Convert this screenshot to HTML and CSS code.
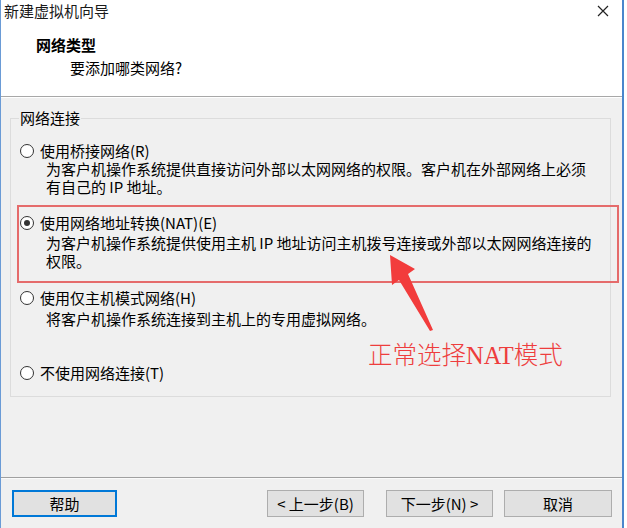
FILE: index.html
```html
<!DOCTYPE html>
<html lang="zh-CN">
<head>
<meta charset="utf-8">
<title>新建虚拟机向导</title>
<link rel="stylesheet" href="styles.css">
</head>
<body>
<div class="window">
  <div class="titlebar">
    <span class="title">新建虚拟机向导</span>
    <svg class="close" width="12" height="12" viewBox="0 0 12 12"><path d="M1 1 L11 11 M11 1 L1 11" stroke="#222" stroke-width="1.2" fill="none"/></svg>
  </div>
  <div class="header">
    <div class="h-title">网络类型</div>
    <div class="h-sub">要添加哪类网络?</div>
  </div>
  <div class="sep"></div>
  <div class="body">
    <div class="group">
      <div class="legend">网络连接</div>
      <div class="opt opt1">
        <div class="opt-title"><span class="radio"></span>使用桥接网络(R)</div>
        <div class="desc">为客户机操作系统提供直接访问外部以太网网络的权限。客户机在外部网络上必须<br>有自己的 IP 地址。</div>
      </div>
      <div class="opt opt2">
        <div class="opt-title"><span class="radio checked"></span>使用网络地址转换(NAT)(E)</div>
        <div class="desc">为客户机操作系统提供使用主机 IP 地址访问主机拨号连接或外部以太网网络连接的<br>权限。</div>
      </div>
      <div class="opt opt3">
        <div class="opt-title"><span class="radio"></span>使用仅主机模式网络(H)</div>
        <div class="desc">将客户机操作系统连接到主机上的专用虚拟网络。</div>
      </div>
      <div class="opt opt4">
        <div class="opt-title"><span class="radio"></span>不使用网络连接(T)</div>
      </div>
    </div>
    <div class="sep bottom-sep"></div>
    <div class="buttons">
      <button class="btn btn-help">帮助</button>
      <button class="btn btn-prev">&lt; 上一步(B)</button>
      <button class="btn btn-next">下一步(N) &gt;</button>
      <button class="btn btn-cancel">取消</button>
    </div>
    <div class="redbox"></div>
    <svg class="arrow" width="60" height="85" viewBox="0 0 60 85"><polygon points="10,5 35,19 28,24 53,80 50,81 19,30 12,35" fill="#f23c3c"/></svg>
    <div class="note">正常选择<span class="latin">NAT</span>模式</div>
  </div>
</div>
</body>
</html>
```
FILE: styles.css
```css
html, body {
  margin: 0;
  padding: 0;
  background: #ffffff;
}
body {
  width: 627px;
  height: 528px;
  overflow: hidden;
  font-family: "Noto Sans CJK SC", "Noto Sans", sans-serif;
  font-size: 15px;
  color: #000;
}
.window {
  width: 621px;
  height: 528px;
  border-left: 1px solid #6a9bd6;
  border-right: 2px solid #4a86cc;
  display: flex;
  flex-direction: column;
  background: #fff;
}
.titlebar {
  height: 21px;
  display: flex;
  align-items: center;
  justify-content: space-between;
  padding-left: 3px;
  padding-right: 13px;
}
.title {
  line-height: 21px;
  color: #1a1a1a;
}
.close {
  display: block;
}
.header {
  height: 75px;
  padding-left: 35px;
  background: #fff;
}
.h-title {
  font-weight: 700;
  line-height: 18px;
  margin-top: 15px;
}
.h-sub {
  line-height: 18px;
  margin-top: 5px;
  padding-left: 34px;
}
.sep {
  height: 1px;
  border-top: 1px solid #a8a8a8;
  background: #fff;
}
.body {
  flex: 1;
  background: #f0f0f0;
  position: relative;
  display: flex;
  flex-direction: column;
}
.group {
  margin: 20px 0 0 9px;
  width: 599px;
  height: 277px;
  border: 1px solid #dcdcdc;
}
.legend {
  margin: -10px 0 0 8px;
  padding: 0 1px;
  width: fit-content;
  background: #f0f0f0;
  line-height: 18px;
}
.opt-title {
  display: flex;
  align-items: center;
  line-height: 18px;
  padding-left: 9px;
}
.radio {
  width: 12px;
  height: 12px;
  border: 1px solid #333;
  border-radius: 50%;
  background: #fff;
  margin-right: 6px;
  position: relative;
  flex: none;
}
.radio.checked::after {
  content: "";
  position: absolute;
  left: 3px;
  top: 3px;
  width: 6px;
  height: 6px;
  border-radius: 50%;
  background: #333;
}
.desc {
  padding-left: 35px;
  line-height: 18px;
  margin-top: 0;
}
.opt1 { margin-top: 15px; }
.opt2 { margin-top: 18px; }
.opt2 .desc { margin-top: 2px; }
.opt3 { margin-top: 19px; }
.opt3 .desc { margin-top: 3px; }
.opt4 { margin-top: 36px; }
.bottom-sep {
  margin-top: 80px;
  background: #fafafa;
  border-top-color: #a0a0a0;
}
.buttons {
  display: flex;
  margin-top: 11px;
}
.btn {
  height: 27px;
  box-sizing: border-box;
  background: #e1e1e1;
  border: 1px solid #adadad;
  font-family: "Noto Sans CJK SC", "Noto Sans", sans-serif;
  font-size: 15px;
  color: #000;
  padding: 0;
  line-height: 24px;
}
.btn-help {
  margin-left: 11px;
  width: 105px;
  border: 2px solid #0078d7;
}
.btn-prev {
  margin-left: 150px;
  width: 97px;
}
.btn-next {
  margin-left: 22px;
  width: 107px;
}
.btn-cancel {
  margin-left: 11px;
  width: 108px;
}
.redbox {
  position: absolute;
  left: 16px;
  top: 107px;
  width: 598px;
  height: 74px;
  border: 2px solid #e56b6b;
}
.arrow {
  position: absolute;
  left: 379px;
  top: 152px;
}
.note {
  position: absolute;
  left: 367px;
  top: 243px;
  font-size: 24.5px;
  line-height: 26px;
  color: #ee3d3d;
  font-weight: 300;
  white-space: nowrap;
}
.note .latin {
  font-family: "Liberation Serif", serif;
  font-weight: 400;
}
```
